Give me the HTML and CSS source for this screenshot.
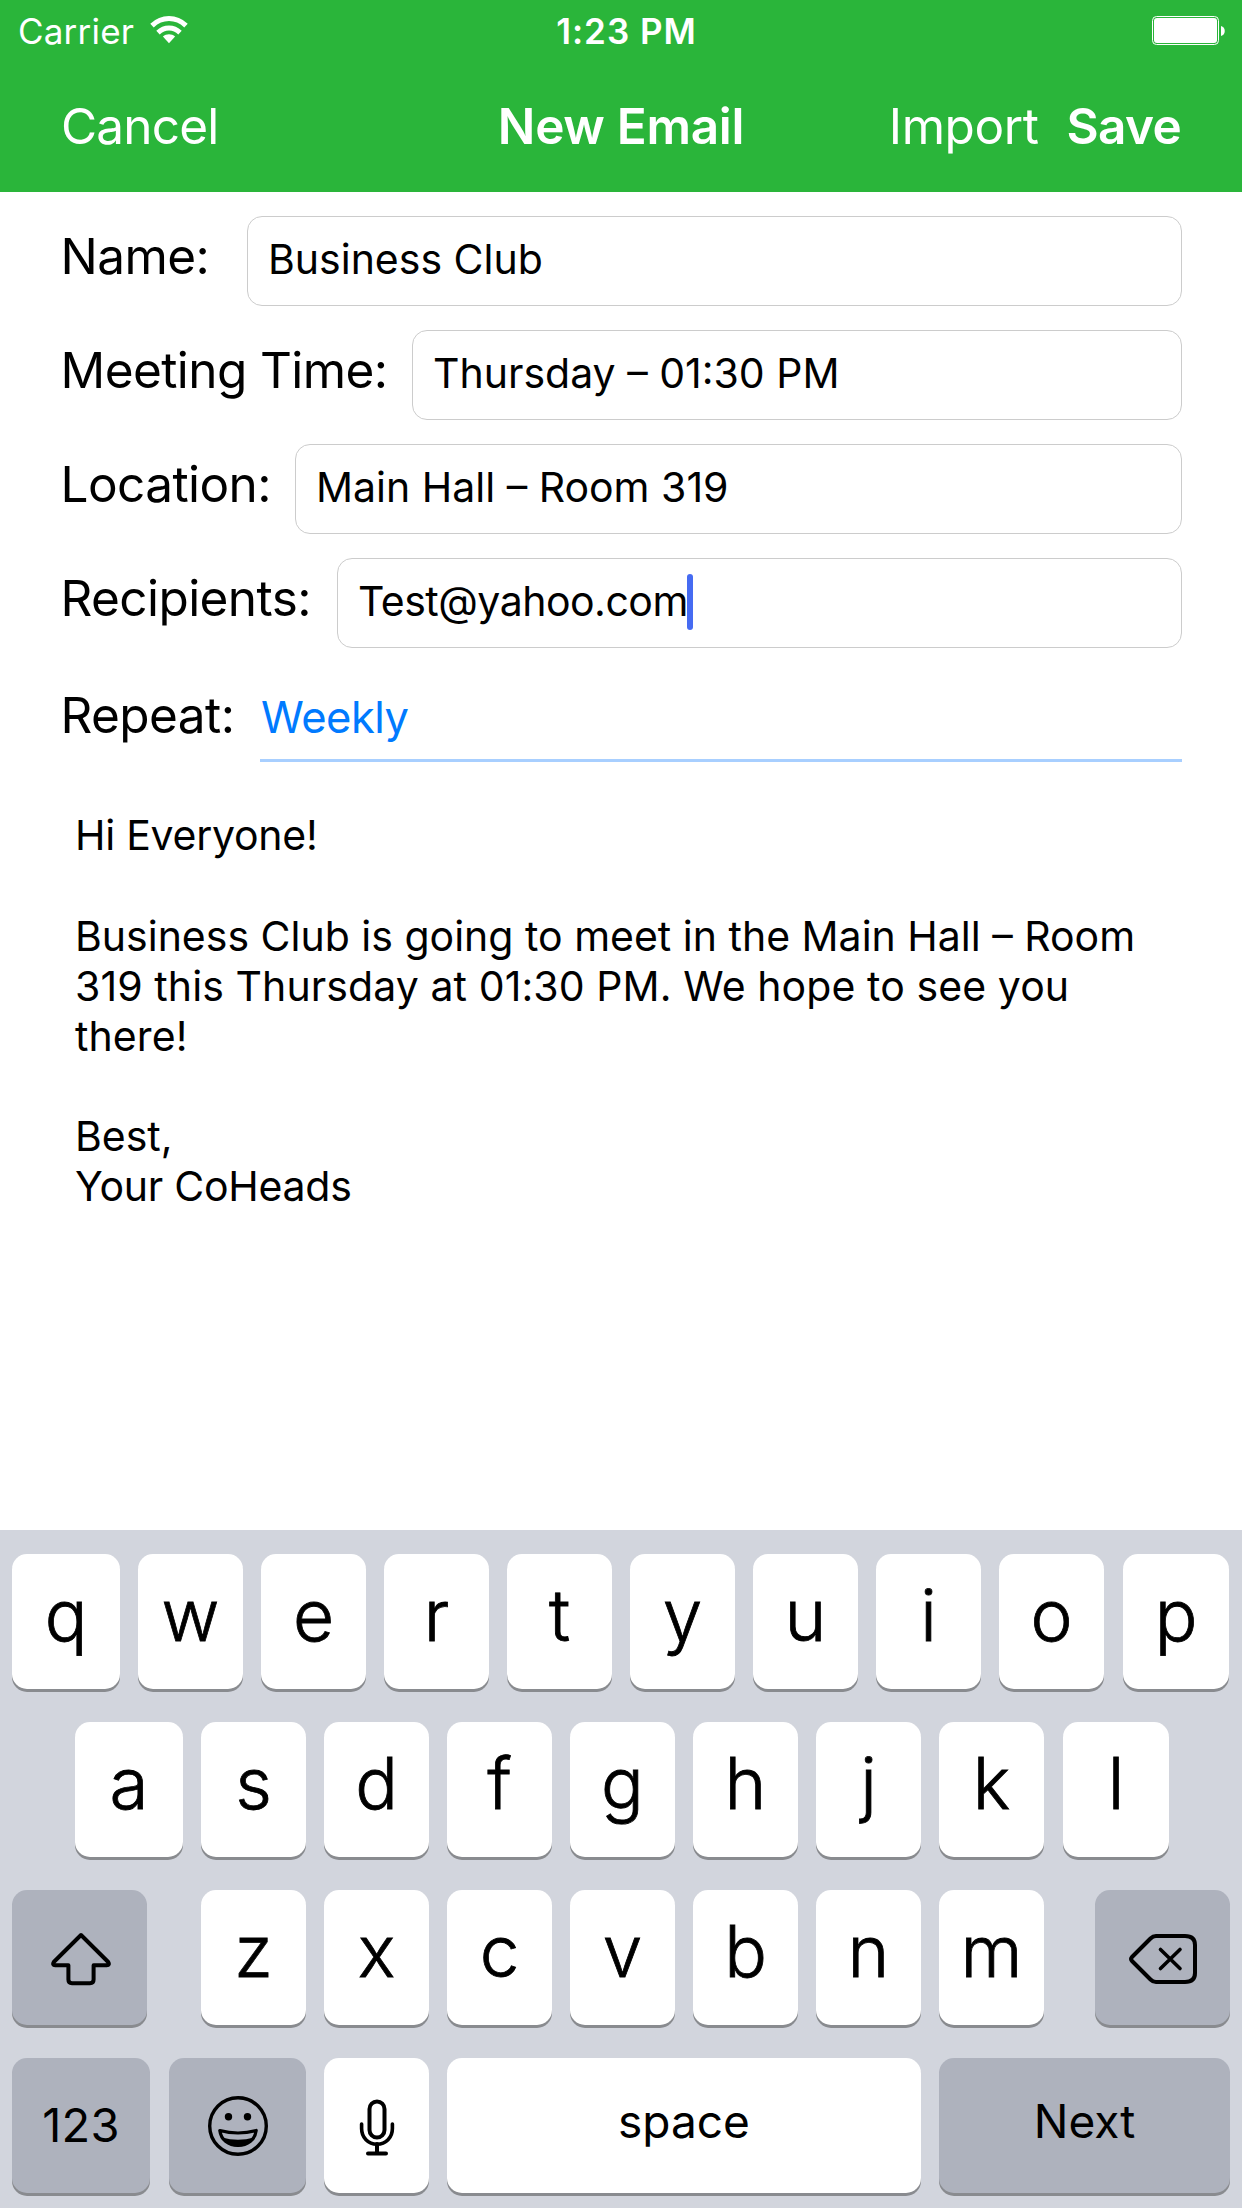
FILE: index.html
```html
<!DOCTYPE html>
<html lang="en">
<head>
<meta charset="utf-8">
<title>New Email</title>
<link rel="stylesheet" href="styles.css">
</head>
<body>
<div class="screen">
  <header class="header">
    <div class="status">
      <div class="status-left">
        <span class="carrier">Carrier</span>
        <svg class="wifi" width="38" height="28" viewBox="0 0 38 28" fill="none" stroke="#fff" stroke-width="5">
          <path d="M2 9.6C12 .2 26 .2 36 9.6"/>
          <path d="M8 16.6c6.400-6 15.600-6 22 0"/>
          <path d="M19 27.200 12.900 20.600c3.400-3 8.800-3 12.200 0z" fill="#fff" stroke="none"/>
        </svg>
      </div>
      <span class="clock">1:23 PM</span>
      <svg class="battery" width="74" height="30" viewBox="0 0 74 30">
        <rect x=".5" y=".5" width="66" height="28" rx="4" fill="none" stroke="#fff"/>
        <rect x="2" y="2" width="63" height="25" rx="3" fill="#fff"/>
        <path d="M69 10c5 1 5 9 0 10z" fill="#fff"/>
      </svg>
    </div>
    <nav class="nav">
      <span class="nav-cancel">Cancel</span>
      <span class="nav-title">New Email</span>
      <span class="nav-actions"><span class="nav-import">Import</span><span class="nav-save">Save</span></span>
    </nav>
  </header>

  <main class="form">
    <div class="row"><label class="label label-name">Name:</label><div class="field">Business Club</div></div>
    <div class="row"><label class="label label-time">Meeting Time:</label><div class="field">Thursday – 01:30 PM</div></div>
    <div class="row"><label class="label label-location">Location:</label><div class="field">Main Hall – Room 319</div></div>
    <div class="row"><label class="label label-recipients">Recipients:</label><div class="field"><span class="email">Test@yahoo.com</span><i class="caret"></i></div></div>
    <div class="row row-repeat"><label class="label label-repeat">Repeat:</label><div class="select">Weekly</div></div>
    <div class="message">
      <p class="greeting tight">Hi Everyone!</p>
      <p>Business Club is going to meet in the Main Hall – Room<br><span class="loose">319 this Thursday at 01:30 PM. We hope to see you<br>there!</span></p>
      <p>Best,<br><span class="tight">Your CoHeads</span></p>
    </div>
  </main>

  <section class="keyboard">
    <div class="keys keys-top">
      <div class="key">q</div><div class="key">w</div><div class="key">e</div><div class="key">r</div><div class="key">t</div><div class="key">y</div><div class="key">u</div><div class="key">i</div><div class="key">o</div><div class="key key-last">p</div>
    </div>
    <div class="keys keys-home">
      <div class="key">a</div><div class="key">s</div><div class="key">d</div><div class="key">f</div><div class="key">g</div><div class="key">h</div><div class="key">j</div><div class="key">k</div><div class="key key-last">l</div>
    </div>
    <div class="keys keys-bottom">
      <div class="key dark">
        <svg class="icon icon-shift" width="60" height="54" viewBox="0 0 60 54" fill="none" stroke="#000" stroke-width="4" stroke-linejoin="round">
          <path d="M30 3 57.200 30q1.800 3-1.500 3.200H42.600V47.500q0 3.700-3.600 3.700H21Q17.400 51.200 17.400 47.500V33.200H4.300Q1 33 2.800 30z"/>
        </svg>
      </div>
      <div class="key">z</div><div class="key">x</div><div class="key">c</div><div class="key">v</div><div class="key">b</div><div class="key">n</div><div class="key">m</div>
      <div class="key dark">
        <svg class="icon icon-delete" width="70" height="52" viewBox="0 0 70 52" fill="none" stroke="#000" stroke-width="4" stroke-linecap="round" stroke-linejoin="round">
          <path d="M28 3H57Q67 3 67 12V40Q67 49 57 49H28Q25 49 22.500 46.500L4 28Q2 26 4 24L22.500 5.500Q25 3 28 3z"/>
          <path d="m32.500 16.500 19.500 19m0-19-19.500 19" stroke-width="3.600"/>
        </svg>
      </div>
    </div>
    <div class="keys keys-space">
      <div class="key dark key-text key-num">123</div>
      <div class="key dark">
        <svg class="icon" width="60" height="60" viewBox="0 0 60 60">
          <circle cx="30" cy="30" r="28.300" fill="none" stroke="#000" stroke-width="3.400"/>
          <circle cx="20.500" cy="20.700" r="3.700"/>
          <circle cx="39.500" cy="20.700" r="3.700"/>
          <path d="M11.800 34.500Q30 39.500 48.200 34.500C47 44 39.500 49.500 30 49.500S13 44 11.800 34.500z" fill="none" stroke="#000" stroke-width="3.200" stroke-linejoin="round"/>
          <path d="M14 41.500q16 4.500 32 0-5 9-16 9t-16-9z"/>
        </svg>
      </div>
      <div class="key">
        <svg class="icon icon-mic" width="36" height="60" viewBox="0 0 36 60" fill="none" stroke="#000" stroke-width="4" stroke-linecap="round">
          <rect x="10.500" y="5.500" width="15" height="36" rx="7.500"/>
          <path d="M2.600 28v4.500c0 9 6.500 15.700 15.400 15.700s15.400-6.700 15.400-15.700V28" stroke-width="3.600"/>
          <path d="M18 48v9M9 57.500h18"/>
        </svg>
      </div>
      <div class="key key-text key-space">space</div>
      <div class="key dark key-text">Next</div>
    </div>
  </section>
</div>
</body>
</html>
```
FILE: styles.css
```css
* { box-sizing: border-box; }
body { margin: 0; background: #fff; }
p { margin: 0; }

.screen {
  width: 1242px;
  height: 2208px;
  display: flex;
  flex-direction: column;
  overflow: hidden;
  background: #fff;
  color: #000;
  font-family: Inter, "Liberation Sans", sans-serif;
  font-size: 41px;
  white-space: nowrap;
}

.header { height: 192px; background: #2ab53a; color: #fff; }

.status {
  height: 60px;
  padding: 0 16px 0 18px;
  display: grid;
  grid-template-columns: 1fr auto 1fr;
  line-height: 62px;
  font-size: 35px;
}
.status-left { display: flex; }
.carrier { width: 132px; letter-spacing: 0.2px; }
.wifi { margin-top: 16px; }
.clock { padding-left: 9px; font-weight: 600; letter-spacing: 1px; }
.battery { margin-top: 16px; justify-self: end; }

.nav {
  height: 132px;
  padding: 0 61px 0 61px;
  display: grid;
  grid-template-columns: 1fr auto 1fr;
  font-size: 49.500px;
  line-height: 132px;
}
.nav-cancel { letter-spacing: -0.8px; }
.nav-title { font-weight: 600; letter-spacing: -0.3px; }
.nav-actions { display: flex; justify-content: flex-end; gap: 28px; }
.nav-import { letter-spacing: -0.4px; }
.nav-save { font-weight: 600; letter-spacing: -0.7px; }

.form { flex: 1; padding: 24px 60px 0; }
.row { display: flex; height: 90px; margin-bottom: 24px; }
.label { flex: none; padding-left: 0.5px; font-size: 49.500px; line-height: 80px; letter-spacing: -0.580px; }
.label-name { width: 187px; }
.label-time { width: 352px; }
.label-location { width: 235px; }
.label-recipients { width: 277px; }
.label-repeat { width: 200px; }
.field {
  flex: 1;
  display: flex;
  align-items: center;
  padding: 0 20px 3px;
  border: 1px solid #ccc;
  border-radius: 15px;
  line-height: 85px;
}
.email { letter-spacing: -0.500px; }
.caret { width: 6px; height: 56px; margin-left: -1px; border-radius: 3px; background: #466bf2; }
.row-repeat { height: 87px; margin-top: 27px; margin-bottom: 27px; }
.select {
  flex: 1;
  padding-left: 1px;
  border-bottom: 3px solid #a8cfff;
  color: #007aff;
  font-size: 43.500px;
  line-height: 84px;
  letter-spacing: -0.500px;
}

.message { padding: 20.500px 15px 0; line-height: 50.120px; }
.message p + p { margin-top: 50.120px; }
.greeting { padding-bottom: 1px; }
.tight { letter-spacing: -0.250px; }
.loose { letter-spacing: 0.090px; }

.keyboard {
  height: 678px;
  padding: 24px 12px 0;
  background: #d2d5dd;
  display: flex;
  flex-direction: column;
  gap: 33px;
}
.keys { display: flex; gap: 18px; height: 135px; }
.key {
  flex: none;
  width: 105px;
  height: 135px;
  display: flex;
  justify-content: center;
  background: #fff;
  border-radius: 15px;
  box-shadow: 0 3px 0 #898b8f;
  font-size: 71px;
  font-weight: 300;
  line-height: 123px;
  -webkit-text-stroke: 0.8px #000;
}
.dark { background: #aeb2bd; }
.icon { align-self: center; }
.icon-shift { margin: 2px 0 0 3px; }
.icon-delete { margin-top: 3px; }
.icon-mic { margin-left: 1px; }
.keys-top .key:first-child, .keys-home .key:first-child { width: 108px; }
.keys-home { padding-left: 63px; }
.key-last { width: 106px; margin-left: 1px; }
.keys-bottom .dark { width: 135px; }
.keys-bottom .dark:first-child { margin-right: 36px; }
.keys-bottom .dark:last-child { margin-left: 33px; }
.keys-space .dark:nth-child(1) { width: 138px; margin-right: 1px; }
.keys-space .dark:nth-child(2) { width: 137px; }
.keys-space .key-space { width: 474px; }
.keys-space .dark:last-child { width: 291px; }
.key-text { font-size: 46px; font-weight: 400; line-height: 127px; -webkit-text-stroke: 0; }
.key-num { font-size: 47px; line-height: 134px; letter-spacing: 0.2px; }
```
